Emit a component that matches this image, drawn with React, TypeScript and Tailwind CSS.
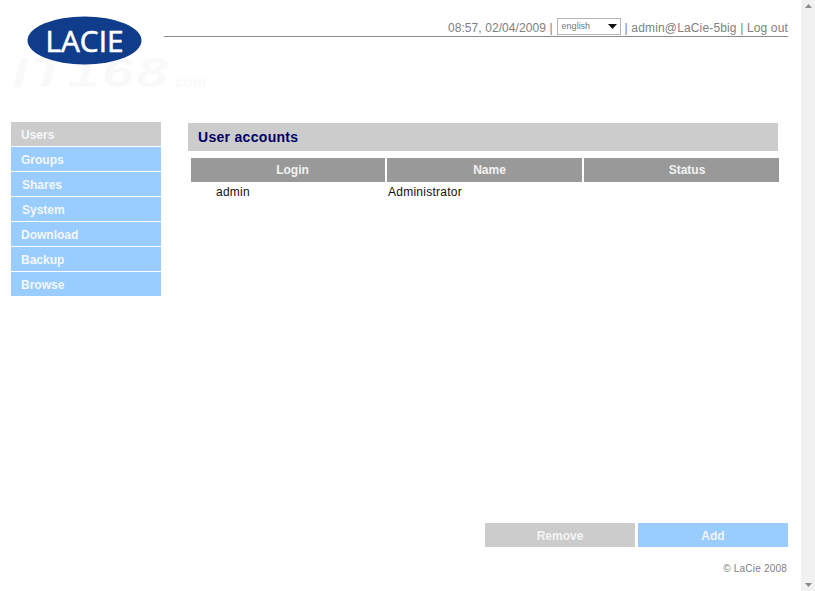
const navItems = [
  { label: 'Users', active: true, indent: 'pl-[10px]' },
  { label: 'Groups', active: false, indent: 'pl-[10px]' },
  { label: 'Shares', active: false, indent: 'pl-[11px]' },
  { label: 'System', active: false, indent: 'pl-[11px]' },
  { label: 'Download', active: false, indent: 'pl-[10px]' },
  { label: 'Backup', active: false, indent: 'pl-[10px]' },
  { label: 'Browse', active: false, indent: 'pl-[10px]' },
]

function Logo() {
  return (
    <svg width="116" height="50" viewBox="0 0 116 50" className="shrink-0">
      <ellipse cx="57.5" cy="24.5" rx="57" ry="24" fill="#0f3d8c" />
      <text
        x="57.5"
        y="36"
        textAnchor="middle"
        fill="#ffffff"
        stroke="#ffffff"
        strokeWidth="0.6"
        fontFamily="'Open Sans', sans-serif"
        fontSize="30"
        textLength="78"
        lengthAdjust="spacingAndGlyphs"
      >
        LACIE
      </text>
    </svg>
  )
}

function Watermark() {
  return (
    <div className="absolute left-[12px] top-[57px] flex items-baseline font-['Liberation_Sans',sans-serif] font-bold italic text-[#f9f9f9] select-none">
      <span className="mr-[41px] inline-block origin-left scale-x-[1.35] text-[42px] leading-[32px] tracking-[2px]">IT168</span>
      <span className="text-[14px] leading-[14px] tracking-[1px]">.com</span>
    </div>
  )
}

function Header() {
  return (
    <div className="relative h-[122px] shrink-0">
      <Watermark />
      <div className="relative flex pl-[27px] pt-[16px] pr-[13px]">
        <Logo />
        <div className="ml-[21px] flex h-[21px] flex-1 items-end justify-end border-b border-[#8c8c8c] text-[12px] leading-[15px] text-[#808080]">
          <span className="tracking-[0.08px]">08:57, 02/04/2009 |</span>
          <div className="mx-[4px] mb-[-1px] mt-[2px] flex h-[17px] w-[64px] items-center justify-between self-start border border-[#b5b5b5] pl-[4px] pr-[3px] text-[9px] text-[#777777]">
            <span>english</span>
            <svg width="9" height="5" viewBox="0 0 9 5">
              <path d="M0 0H9L4.5 5Z" fill="#111111" />
            </svg>
          </div>
          <span className="tracking-[0.15px]">| admin@LaCie-5big | Log out</span>
        </div>
      </div>
    </div>
  )
}

function Sidebar() {
  return (
    <div className="ml-[11px] flex w-[150px] shrink-0 flex-col gap-px">
      {navItems.map((item) => (
        <div
          key={item.label}
          className={`flex h-[24px] items-center pt-[2px] text-[12px] font-bold text-[#f4f8fc] ${item.indent} ${
            item.active ? 'bg-[#cccccc]' : 'bg-[#99ccff]'
          }`}
        >
          {item.label}
        </div>
      ))}
    </div>
  )
}

function UserTable() {
  return (
    <div className="ml-[3px] mt-[7px] w-[588px]">
      <div className="grid grid-cols-[194px_195px_195px] gap-[2px] text-[12px] font-bold text-[#f2f2f2]">
        <div className="flex h-[24px] items-center justify-center bg-[#999999] pl-[9px]">Login</div>
        <div className="flex h-[24px] items-center justify-center bg-[#999999] pl-[10px]">Name</div>
        <div className="flex h-[24px] items-center justify-center bg-[#999999] pl-[11px]">Status</div>
      </div>
      <div className="grid grid-cols-[194px_195px_195px] gap-[2px] text-[12px] tracking-[0.25px] text-[#111111]">
        <div className="flex h-[19px] items-center pl-[25px]">admin</div>
        <div className="flex h-[19px] items-center pl-[1px]">Administrator</div>
        <div />
      </div>
    </div>
  )
}

export default function App() {
  return (
    <div className="flex h-[591px] w-[815px] overflow-hidden bg-white font-['Liberation_Sans',sans-serif]">
      <div className="flex w-[801px] flex-col">
        <Header />
        <div className="flex flex-1">
          <Sidebar />
          <div className="ml-[27px] flex flex-1 flex-col pt-px">
            <div className="flex h-[28px] w-[590px] items-center bg-[#cccccc] pl-[10px] text-[14px] font-bold tracking-[0.3px] text-[#000066]">
              User accounts
            </div>
            <UserTable />
            <div className="mt-auto flex justify-end gap-[3px] pr-[13px] text-[12px] font-bold text-[#f4f4f4]">
              <div className="flex h-[24px] w-[150px] items-center justify-center bg-[#cccccc] pt-[2px]">Remove</div>
              <div className="flex h-[24px] w-[150px] items-center justify-center bg-[#99ccff] pt-[2px]">Add</div>
            </div>
            <div className="flex h-[44px] items-center justify-end pb-[2px] pr-[14px] text-[10px] tracking-[0.2px] text-[#808080]">
              © LaCie 2008
            </div>
          </div>
        </div>
      </div>
      <div className="flex w-[14px] shrink-0 flex-col items-center justify-between bg-[#f1f1f1] py-[4px]">
        <svg width="7" height="4" viewBox="0 0 7 4">
          <path d="M0 4H7L3.5 0Z" fill="#8a8a8a" />
        </svg>
        <svg width="7" height="4" viewBox="0 0 7 4">
          <path d="M0 0H7L3.5 4Z" fill="#8a8a8a" />
        </svg>
      </div>
    </div>
  )
}
